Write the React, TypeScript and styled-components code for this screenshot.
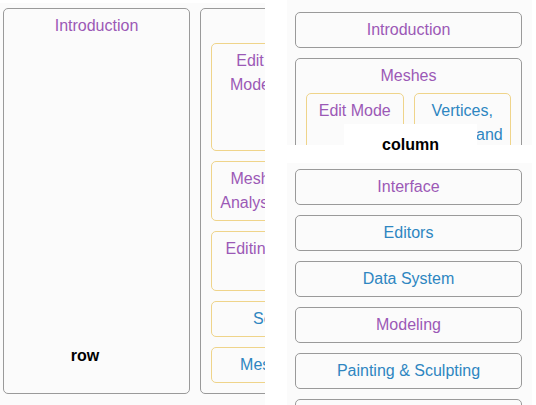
import React from 'react';
import styled, { createGlobalStyle } from 'styled-components';

type Tone = 'visited' | 'link';

const GlobalStyle = createGlobalStyle`
  *, *::before, *::after {
    box-sizing: border-box;
  }
  html, body {
    margin: 0;
    padding: 0;
    background: #ffffff;
  }
  body {
    font-family: 'Liberation Sans', Arial, sans-serif;
    font-size: 16px;
    line-height: 24px;
  }
`;

const colors = {
  visited: '#9b59b6',
  link: '#2e86c1',
  frame: '#9a9a9a',
  child: '#efd48a',
  pane: '#fbfbfb',
};

const Page = styled.div`
  display: grid;
  grid-template-columns: 265px 245px;
  column-gap: 22px;
  width: 536px;
  height: 405px;
  overflow: hidden;
`;

const Pane = styled.div`
  position: relative;
  overflow: hidden;
  background: ${colors.pane};
`;

const RowPane = styled(Pane)`
  margin-top: 3px;
  padding: 5px 0 0 3px;
`;

const RightColumn = styled.div`
  position: relative;
  display: flex;
  flex-direction: column;
  gap: 18px;
`;

const TopPane = styled(Pane)`
  height: 145px;
  flex-shrink: 0;
  padding: 12px 10px 0 8px;
`;

const BottomPane = styled(Pane)`
  flex: 1;
  padding: 6px 10px 0 8px;
`;

const Tree = styled.div<{ $dir: 'row' | 'column' }>`
  display: flex;
  flex-direction: ${({ $dir }) => $dir};
  gap: 10px;
`;

const Node = styled.div<{ $child?: boolean; $width?: number; $grow?: boolean }>`
  border: 1px solid ${({ $child }) => ($child ? colors.child : colors.frame)};
  border-radius: 5px;
  padding: 5px;
  text-align: center;
  flex-shrink: 0;
  ${({ $width }) => ($width ? `width: ${$width}px;` : '')}
  ${({ $grow }) => ($grow ? 'flex: 1 1 0; min-width: 0;' : '')}
`;

const Label = styled.span<{ $tone: Tone }>`
  color: ${({ $tone }) => colors[$tone]};
`;

const Children = styled.div<{ $dir: 'row' | 'column' }>`
  display: flex;
  flex-direction: ${({ $dir }) => $dir};
  gap: 10px;
  padding: 5px;
`;

const Pair = styled.div`
  display: flex;
  gap: 10px;
`;

const Caption = styled.div`
  position: absolute;
  font-weight: bold;
  color: #000;
  text-align: center;
`;

const RowCaption = styled(Caption)`
  left: 60px;
  top: 341px;
  width: 50px;
`;

const ColumnCaption = styled(Caption)`
  left: 57px;
  top: 124px;
  width: 133px;
  height: 39px;
  padding-top: 9px;
  background: #ffffff;
`;

const Leaf = ({ text, tone, width, grow }: { text: string; tone: Tone; width?: number; grow?: boolean }) => (
  <Node $child $width={width} $grow={grow}>
    <Label $tone={tone}>{text}</Label>
  </Node>
);

const chapters: { text: string; tone: Tone }[] = [
  { text: 'Interface', tone: 'visited' },
  { text: 'Editors', tone: 'link' },
  { text: 'Data System', tone: 'link' },
  { text: 'Modeling', tone: 'visited' },
  { text: 'Painting & Sculpting', tone: 'link' },
  { text: 'Grease Pencil', tone: 'link' },
];

export default function App() {
  return (
    <>
      <GlobalStyle />
      <Page>
        <RowPane>
          <Tree $dir="row" style={{ height: 386 }}>
            <Node $width={187}>
              <Label $tone="visited">Introduction</Label>
            </Node>
            <Node $width={330}>
              <Label $tone="visited">Meshes</Label>
              <Children $dir="column">
                <Pair>
                  <Leaf text="Edit Mode" tone="visited" width={78} />
                  <Leaf text="Vertices, Edges, and Faces" tone="link" width={80} />
                </Pair>
                <Pair>
                  <Leaf text="Mesh Analysis" tone="visited" width={78} />
                  <Leaf text="Structure" tone="link" width={80} />
                </Pair>
                <Pair>
                  <Leaf text="Editing" tone="visited" width={78} />
                  <Leaf text="Mesh Tools" tone="link" width={80} />
                </Pair>
                <Leaf text="Selecting" tone="link" width={150} />
                <Leaf text="Mesh Primitives" tone="link" width={171} />
              </Children>
            </Node>
          </Tree>
          <RowCaption>row</RowCaption>
        </RowPane>

        <RightColumn>
          <TopPane>
            <Tree $dir="column">
              <Node>
                <Label $tone="visited">Introduction</Label>
              </Node>
              <Node>
                <Label $tone="visited">Meshes</Label>
                <Children $dir="row">
                  <Leaf text="Edit Mode" tone="visited" grow />
                  <Leaf text="Vertices, Edges, and Faces" tone="link" grow />
                </Children>
              </Node>
            </Tree>
          </TopPane>
          <BottomPane>
            <Tree $dir="column">
              {chapters.map((c) => (
                <Node key={c.text}>
                  <Label $tone={c.tone}>{c.text}</Label>
                </Node>
              ))}
            </Tree>
          </BottomPane>
          <ColumnCaption>column</ColumnCaption>
        </RightColumn>
      </Page>
    </>
  );
}
